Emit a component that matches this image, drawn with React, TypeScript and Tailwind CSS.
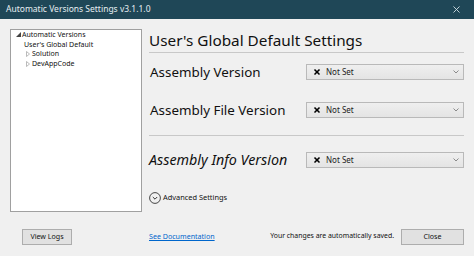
import { X } from 'lucide-react';

const fields = [
  { label: 'Assembly Version', top: 'mt-[11px]' },
  { label: 'Assembly File Version', top: 'mt-[22px]' },
];

function NotSetSelect() {
  return (
    <div className="w-[158px] h-[16px] flex items-center border border-[#b9b9b9] bg-gradient-to-b from-[#efefef] to-[#e4e4e4] pl-[6px] pr-[4px]">
      <X size={8} strokeWidth={5} className="text-black" />
      <span className="ml-[5px] text-[8px] text-[#222] leading-none">Not Set</span>
      <svg className="ml-auto" width="6" height="4" viewBox="0 0 6 4">
        <path d="M0.5 0.5 L3 3 L5.5 0.5" fill="none" stroke="#8a8a8a" strokeWidth="1" />
      </svg>
    </div>
  );
}

export default function App() {
  return (
    <div className="w-[474px] h-[256px] bg-[#f0f0f0] flex flex-col font-['Noto_Sans',sans-serif] overflow-hidden">
      {/* title bar */}
      <div className="h-[19px] bg-[#1f4757] flex items-center pl-[6px] pr-[12px] shrink-0">
        <span className="text-[8.5px] text-[#e6eef1] leading-none">Automatic Versions Settings v3.1.1.0</span>
        <X size={11} strokeWidth={2} className="ml-auto text-[#cfdde3]" />
      </div>

      <div className="flex flex-1">
        {/* tree */}
        <div className="ml-[10px] mt-[10px] w-[132px] h-[183px] bg-white border border-[#a0a0a0] text-[7px] leading-[9.6px] text-[#111]">
          <div className="flex items-center pl-[5px]">
            <svg width="5" height="5" viewBox="0 0 5 5"><path d="M5 0 L5 5 L0 5 Z" fill="#444" /></svg>
            <span className="ml-[1px]">Automatic Versions</span>
          </div>
          <div className="pl-[13px]">User's Global Default</div>
          <div className="flex items-center pl-[15px]">
            <svg width="4" height="6" viewBox="0 0 4 6"><path d="M0.5 0.5 L3.5 3 L0.5 5.5 Z" fill="none" stroke="#aaa" strokeWidth="0.8" /></svg>
            <span className="ml-[2px]">Solution</span>
          </div>
          <div className="flex items-center pl-[15px]">
            <svg width="4" height="6" viewBox="0 0 4 6"><path d="M0.5 0.5 L3.5 3 L0.5 5.5 Z" fill="none" stroke="#aaa" strokeWidth="0.8" /></svg>
            <span className="ml-[2px]">DevAppCode</span>
          </div>
        </div>

        {/* settings */}
        <div className="ml-[7px] w-[315px] flex flex-col text-[#111]">
          <div className="mt-[11px] pb-[2px] border-b border-[#c8c8c8] text-[15.3px] leading-[20px]">User's Global Default Settings</div>
          {fields.map((f) => (
            <div key={f.label} className={`${f.top} h-[16px] flex items-center justify-between`}>
              <span className="pl-[1px] text-[13.4px]">{f.label}</span>
              <NotSetSelect />
            </div>
          ))}
          <div className="mt-[17px] border-b border-[#c8c8c8]" />
          <div className="mt-[16px] h-[16px] flex items-center justify-between">
            <span className="text-[14.3px] italic">Assembly Info Version</span>
            <NotSetSelect />
          </div>
          <div className="mt-[24px] flex items-center">
            <svg width="12" height="12" viewBox="0 0 12 12">
              <circle cx="6" cy="6" r="5.4" fill="none" stroke="#333" strokeWidth="0.9" />
              <path d="M3.8 5 L6 7.2 L8.2 5" fill="none" stroke="#333" strokeWidth="1" />
            </svg>
            <span className="ml-[2px] text-[7.4px] leading-none">Advanced Settings</span>
          </div>
        </div>
      </div>

      {/* footer */}
      <div className="h-[37px] flex items-start pt-[10px] shrink-0 text-[7.1px]">
        <button className="ml-[22px] w-[50px] h-[16px] bg-[#e1e1e1] border border-[#adadad] text-[#111] leading-none">View Logs</button>
        <a className="ml-[77px] mt-[4px] text-[#0066cc] underline leading-none">See Documentation</a>
        <span className="ml-auto mt-[4px] text-[#111] text-[6.9px] leading-none">Your changes are automatically saved.</span>
        <button className="ml-[7px] mr-[10px] w-[63px] h-[16px] bg-[#e1e1e1] border border-[#adadad] text-[#111] leading-none">Close</button>
      </div>
    </div>
  );
}
